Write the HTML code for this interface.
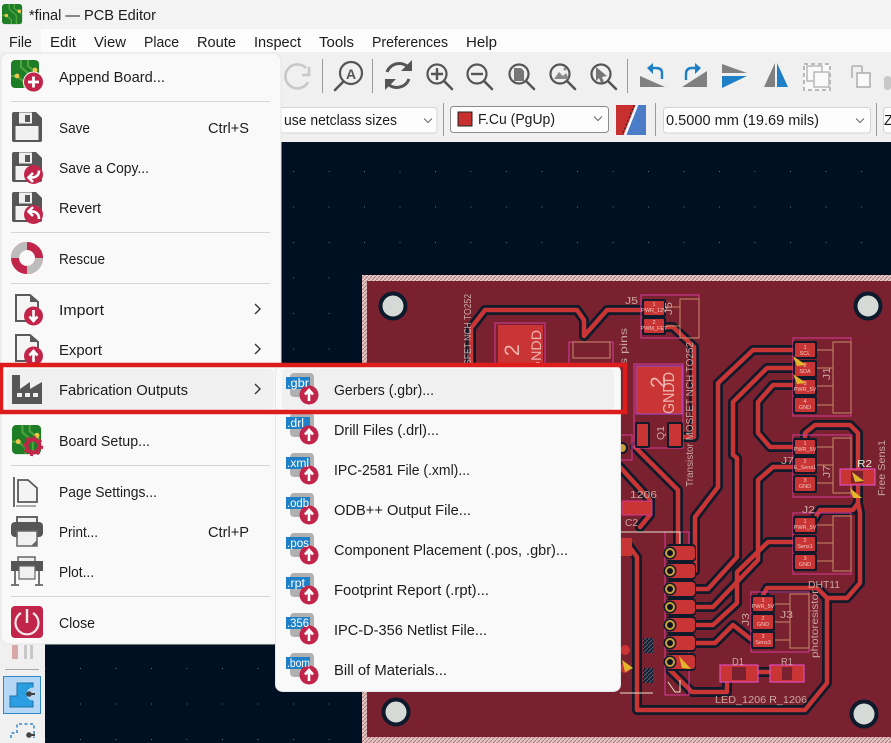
<!DOCTYPE html>
<html><head><meta charset="utf-8"><title>final — PCB Editor</title>
<style>
html,body{margin:0;padding:0;width:891px;height:743px;overflow:hidden;background:#f0f0f0}
svg{display:block}
text{font-family:"Liberation Sans",sans-serif;font-size:14.5px;fill:#1c1c1c}
.silk{fill:#c9a79f;font-size:10px}
.p{fill:#eec8c0;font-size:5.500px;text-anchor:middle}
.l{font-size:11.500px;fill:#fff}
</style></head><body>
<svg width="891" height="743" viewBox="0 0 891 743" xmlns="http://www.w3.org/2000/svg">
<defs>
<pattern id="grid" x="9" y="29" width="35.5" height="35.5" patternUnits="userSpaceOnUse"><rect width="1" height="1" fill="#66707c"/></pattern>
<pattern id="edge" width="4" height="4" patternUnits="userSpaceOnUse"><rect width="4" height="4" fill="#e6c8c6"/><path d="M0 4L4 0" stroke="#a87c7c" stroke-width="1"/></pattern>
<pattern id="hat" width="4" height="4" patternUnits="userSpaceOnUse"><rect width="4" height="4" fill="#14202f"/><path d="M0 4L4 0" stroke="#5a5f78" stroke-width="1"/></pattern>
<g id="tr" fill="none" stroke-linejoin="round" stroke-linecap="round">
<path d="M471 370V328L485 310H577L584 320V336L607 310H650"/>
<path d="M663 327H673L694 347V437H683"/>
<path d="M795 350H753L718 383V487L695 517V571H688"/>
<path d="M795 368H767L733 402V455L737 458V557L708 589H690"/>
<path d="M795 385H773L758 402V433L770 447H795"/>
<path d="M795 467H773L758 480V560L713 607H690"/>
<path d="M805 443V433L815 425H850L858 433V503L853 510H820L812 523"/>
<path d="M858 503L860 513V583L847 598H827L817 588H767L762 597"/>
<path d="M795 542H768L737 572V603L713 625H690"/>
<path d="M690 643H715L733 625L752 640"/>
<path d="M670 663V670L692 692H727V677"/>
<path d="M827 598V683L805 710H637V557L628 545"/>
<path d="M773 672H758"/>
<path d="M635 447L678 490V547"/>
<path d="M620 467L650 500V515L640 527"/>
</g>
<g id="badge"><circle r="9.5" fill="#c2254a"/></g>
<g id="up"><circle r="9.5" fill="#c2254a"/><path d="M0 6V-4M-4 -0.5L0 -5L4 -0.5" fill="none" stroke="#fff" stroke-width="2.6"/></g>
<g id="down"><circle r="9.5" fill="#c2254a"/><path d="M0 -6V4M-4 0.5L0 5L4 0.5" fill="none" stroke="#fff" stroke-width="2.6"/></g>
<g id="floppy"><path d="M0 2Q0 0 2 0H24L30 6V28Q30 30 28 30H2Q0 30 0 28Z" fill="#565656"/><rect x="3.500" y="14" width="23" height="14" fill="#f1f1f1"/><rect x="7" y="0.500" width="13" height="11" fill="#f1f1f1"/><rect x="13" y="3" width="5" height="7" fill="#565656"/></g>
<g id="doc"><path d="M1 1H15L23 8V27H1Z" fill="#f4f4f4" stroke="#5a5a5a" stroke-width="2"/><path d="M15 0L24 8H15Z" fill="#5a5a5a"/></g>
<g id="sub"><rect x="4" y="-17" width="24" height="24" rx="4" fill="#b0b0b0"/><rect x="0" y="-13" width="24" height="12" fill="#1f80c8"/><use href="#up" x="23" y="5"/></g>
<g id="chev"><path d="M-3 -5L2 0L-3 5" fill="none" stroke="#333" stroke-width="1.400"/></g>
<g id="dd"><path d="M-4 -2.500L0 1.500L4 -2.500" fill="none" stroke="#666" stroke-width="1"/></g>
<g id="zl"><circle cx="11" cy="11" r="9.500" fill="#f0f0f0" stroke="#555" stroke-width="2.200"/><path d="M18 18L26 26" stroke="#555" stroke-width="2.600" stroke-linecap="round"/></g>
<g id="pad"><rect x="-2" y="-2" width="24" height="18" rx="2" fill="#101a2a"/><rect width="20" height="14" rx="1" fill="#c93434"/></g>
<g id="padv"><rect x="-4" y="-9" width="30" height="18" rx="4" fill="#101a2a"/><rect x="-4" y="-7" width="29" height="14" rx="3" fill="#c93434"/><circle r="6.500" fill="#101a2a"/><circle r="5" fill="#c9a03a"/><circle r="3" fill="#0a1420"/></g>
<g id="green"><rect width="28" height="28" rx="4" fill="#1e7d27"/><path d="M10 0V7L20 16V28M17 0V6L27 14M0 16H6L13 22V28" fill="none" stroke="#4fa53c" stroke-width="2"/><circle cx="6" cy="16" r="2.400" fill="#efc64a"/><circle cx="24" cy="10" r="2.400" fill="#efc64a"/></g>
</defs>

<!-- canvas -->
<rect x="0" y="142" width="891" height="601" fill="#001023"/>
<rect x="45" y="142" width="846" height="601" fill="url(#grid)"/>

<!-- board -->
<rect x="362" y="275" width="560" height="480" fill="url(#edge)"/>
<rect x="367" y="281" width="560" height="456" fill="#7a2130"/>
<use href="#tr" stroke="#0f1a2b" stroke-width="10"/>
<use href="#tr" stroke="#c93434" stroke-width="4.500"/>
<g fill="#d6dad6" stroke="#0d1a2c" stroke-width="4">
<circle cx="393" cy="306" r="12.500"/><circle cx="868" cy="306" r="12.500"/><circle cx="864" cy="714" r="12.500"/><circle cx="396" cy="712" r="12.500"/>
</g>

<!-- footprints -->
<g fill="none" stroke="#d23a92" stroke-width="1.100">
<rect x="641" y="295" width="58" height="43"/><rect x="634" y="364" width="49" height="84"/><rect x="793" y="338" width="58" height="78"/>
<rect x="793" y="435" width="58" height="62"/><rect x="793" y="513" width="58" height="61"/><rect x="751" y="592" width="58" height="60"/>
<rect x="665" y="532" width="24" height="163"/><rect x="569" y="342" width="44" height="30"/><rect x="620" y="435" width="12" height="25"/>
<rect x="495" y="323" width="50" height="60"/>
</g>
<g fill="none" stroke="#c68a66" stroke-width="1">
<rect x="680" y="299" width="19" height="39"/><rect x="833" y="342" width="18" height="71"/><rect x="833" y="438" width="18" height="55"/>
<rect x="833" y="516" width="18" height="55"/><rect x="790" y="594" width="19" height="54"/><rect x="573" y="342" width="37" height="16"/>
<path d="M815 350H833M815 368H833M815 386H833M815 405H833M815 447H833M815 465H833M815 483H833M815 525H833M815 543H833M815 561H833M773 604H790M773 622H790M773 640H790M663 307H680M663 326H680"/>
<path d="M620 532H665M620 693H648"/>
</g>
<path d="M620 532H680V545M680 680V692H675L668 682M620 693H653" fill="none" stroke="#e8e4c8" stroke-width="1"/>
<rect x="636" y="366" width="46" height="48" fill="#c93434" stroke="#9a4ad0" stroke-width="1"/>
<rect x="498" y="325" width="45" height="45" fill="#c93434"/>
<g fill="#101a2a"><rect x="635" y="422" width="15" height="26" rx="2"/><rect x="667" y="422" width="16" height="26" rx="2"/></g>
<g fill="#c93434"><rect x="637" y="424" width="11" height="22"/><rect x="669" y="424" width="12" height="22"/></g>
<use href="#pad" x="644" y="301"/><use href="#pad" x="644" y="319"/>
<use href="#pad" x="795" y="343"/><use href="#pad" x="795" y="362"/><use href="#pad" x="795" y="380"/><use href="#pad" x="795" y="398"/>
<use href="#pad" x="795" y="440"/><use href="#pad" x="795" y="458"/><use href="#pad" x="795" y="477"/>
<use href="#pad" x="795" y="518"/><use href="#pad" x="795" y="537"/><use href="#pad" x="795" y="555"/>
<use href="#pad" x="753" y="597"/><use href="#pad" x="753" y="615"/><use href="#pad" x="753" y="633"/>
<text class="p" x="654" y="306">1</text><text class="p" x="654" y="312">PWR_12V</text><text class="p" x="654" y="324">2</text><text class="p" x="654" y="330">PWM_FET</text>
<text class="p" x="805" y="349">1</text><text class="p" x="805" y="355">SCL</text><text class="p" x="805" y="367">2</text><text class="p" x="805" y="373">SDA</text><text class="p" x="805" y="385">3</text><text class="p" x="805" y="391">PWR_5V</text><text class="p" x="805" y="403">4</text><text class="p" x="805" y="409">GND</text>
<text class="p" x="805" y="445">1</text><text class="p" x="805" y="451">PWR_5V</text><text class="p" x="805" y="463">2</text><text class="p" x="805" y="469">E_Sens1</text><text class="p" x="805" y="482">3</text><text class="p" x="805" y="488">GND</text>
<text class="p" x="805" y="523">1</text><text class="p" x="805" y="529">PWR_5V</text><text class="p" x="805" y="542">2</text><text class="p" x="805" y="548">Sens1</text><text class="p" x="805" y="560">3</text><text class="p" x="805" y="566">GND</text>
<text class="p" x="763" y="602">1</text><text class="p" x="763" y="608">PWR_5V</text><text class="p" x="763" y="620">2</text><text class="p" x="763" y="626">GND</text><text class="p" x="763" y="638">3</text><text class="p" x="763" y="644">Sens3</text>
<use href="#padv" x="670" y="553"/><use href="#padv" x="670" y="571"/><use href="#padv" x="670" y="589"/><use href="#padv" x="670" y="607"/><use href="#padv" x="670" y="625"/><use href="#padv" x="670" y="643"/><use href="#padv" x="670" y="662"/>
<g fill="#c93434" stroke="#e04cc0" stroke-width="1.200"><rect x="720" y="665" width="38" height="17"/><rect x="770" y="665" width="34" height="17"/><rect x="840" y="469" width="35" height="16"/></g>
<rect x="732" y="667" width="14" height="13" fill="#7a2130"/><rect x="782" y="667" width="10" height="13" fill="#7a2130"/><rect x="851" y="471" width="12" height="12" fill="#7a2130"/>
<rect x="643" y="638" width="10" height="15" fill="url(#hat)"/><rect x="643" y="668" width="10" height="15" fill="url(#hat)"/>
<circle cx="625" cy="650" r="5" fill="#c93434"/><circle cx="625" cy="668" r="5" fill="#c93434"/>
<rect x="621" y="538" width="11" height="18" fill="#c93434"/><rect x="622" y="501" width="30" height="14" fill="#c93434" stroke="#d23a92"/>
<circle cx="622" cy="448" r="5" fill="#c9a03a" stroke="#101a2a" stroke-width="2"/>
<g fill="#e3b52b"><path d="M793 356L806 365L797 366Z"/><path d="M793 374L806 383L797 384Z"/><path d="M852 472L864 481L855 482Z"/><path d="M850 488L862 498L853 498Z"/><path d="M679 656L691 669L682 668Z"/><path d="M622 660L633 668L625 672Z"/></g>

<!-- silk text -->
<text class="silk" x="625" y="304" textLength="13" lengthAdjust="spacingAndGlyphs">J5</text>
<text x="658" y="395" style="font-size:21px;fill:#eeb5b0" transform="rotate(-90 658 388)">2</text>
<text x="674" y="414" transform="rotate(-90 674 414)" style="font-size:16px;fill:#eeb5b0" textLength="42" lengthAdjust="spacingAndGlyphs">GNDD</text>
<text x="519" y="356" transform="rotate(-90 519 356)" style="font-size:21px;fill:#eeb5b0">2</text>
<text x="541" y="372" transform="rotate(-90 541 372)" style="font-size:14px;fill:#eeb5b0" textLength="42" lengthAdjust="spacingAndGlyphs">GNDD</text>
<text class="silk" x="693" y="487" transform="rotate(-90 693 487)" textLength="145" lengthAdjust="spacingAndGlyphs">Transistor MOSFET NCH TO252</text>
<text class="silk" x="471" y="365" transform="rotate(-90 471 365)" textLength="71" lengthAdjust="spacingAndGlyphs">SFET NCH TO252</text>
<text class="silk" x="627" y="365" transform="rotate(-90 627 365)" textLength="37" lengthAdjust="spacingAndGlyphs">s pins</text>
<text class="silk" x="664" y="440" transform="rotate(-90 664 440)" textLength="14" lengthAdjust="spacingAndGlyphs">Q1</text>
<text class="silk" x="672" y="315" transform="rotate(-90 672 315)" textLength="13" lengthAdjust="spacingAndGlyphs">J5</text>
<text class="silk" x="781" y="464" textLength="13" lengthAdjust="spacingAndGlyphs">J7</text>
<text class="silk" x="802" y="513" textLength="13" lengthAdjust="spacingAndGlyphs">J2</text>
<text class="silk" x="780" y="618" textLength="13" lengthAdjust="spacingAndGlyphs">J3</text>
<text class="silk" x="749" y="626" transform="rotate(-90 749 626)" textLength="13" lengthAdjust="spacingAndGlyphs">J3</text>
<text class="silk" x="830" y="380" transform="rotate(-90 830 380)" textLength="13" lengthAdjust="spacingAndGlyphs">J1</text>
<text class="silk" x="830" y="478" transform="rotate(-90 830 478)" textLength="13" lengthAdjust="spacingAndGlyphs">J7</text>
<text class="silk" x="857" y="467" style="fill:#e8e8d0" textLength="15" lengthAdjust="spacingAndGlyphs">R2</text>
<text class="silk" x="885" y="496" transform="rotate(-90 885 496)" textLength="56" lengthAdjust="spacingAndGlyphs">Free Sens1</text>
<text class="silk" x="808" y="588" textLength="32" lengthAdjust="spacingAndGlyphs">DHT11</text>
<text class="silk" x="818" y="658" transform="rotate(-90 818 658)" textLength="68" lengthAdjust="spacingAndGlyphs">photoresistor</text>
<text class="silk" x="715" y="703" textLength="92" lengthAdjust="spacingAndGlyphs">LED_1206 R_1206</text>
<text class="silk" x="732" y="665" textLength="12" lengthAdjust="spacingAndGlyphs">D1</text>
<text class="silk" x="781" y="665" textLength="12" lengthAdjust="spacingAndGlyphs">R1</text>
<text class="silk" x="625" y="526" textLength="13" lengthAdjust="spacingAndGlyphs">C2</text>
<text class="silk" x="630" y="498" textLength="27" lengthAdjust="spacingAndGlyphs">1206</text>

<!-- title, menu, toolbars -->
<rect width="891" height="29" fill="#f3f3f3"/>
<rect y="29" width="891" height="23" fill="#fcfcfc"/>
<rect y="29" width="41" height="23" fill="#f5f5f5"/>
<rect y="52" width="891" height="90" fill="#f0f0f0"/>
<use href="#green" transform="translate(2 4) scale(.72)"/>
<text x="29" y="20" textLength="127" lengthAdjust="spacingAndGlyphs">*final — PCB Editor</text>
<text x="9" y="47" textLength="23" lengthAdjust="spacingAndGlyphs">File</text>
<text x="50" y="47" textLength="26" lengthAdjust="spacingAndGlyphs">Edit</text>
<text x="94" y="47" textLength="32" lengthAdjust="spacingAndGlyphs">View</text>
<text x="144" y="47" textLength="35" lengthAdjust="spacingAndGlyphs">Place</text>
<text x="197" y="47" textLength="39" lengthAdjust="spacingAndGlyphs">Route</text>
<text x="254" y="47" textLength="47" lengthAdjust="spacingAndGlyphs">Inspect</text>
<text x="319" y="47" textLength="35" lengthAdjust="spacingAndGlyphs">Tools</text>
<text x="372" y="47" textLength="76" lengthAdjust="spacingAndGlyphs">Preferences</text>
<text x="466" y="47" textLength="31" lengthAdjust="spacingAndGlyphs">Help</text>

<g fill="none" stroke="#c8c8c8" stroke-width="2.600"><path d="M306 68A12 12 0 1 0 308 82"/><path d="M302 75L309 75V67"/></g>
<g fill="#9a9a9a"><rect x="322" y="59" width="1" height="34"/><rect x="372" y="59" width="1" height="34"/><rect x="627" y="59" width="1" height="34"/><rect x="443" y="103" width="1" height="33"/><rect x="655" y="103" width="1" height="33"/><rect x="876" y="103" width="1" height="33"/></g>

<circle cx="351" cy="73" r="11" fill="#f0f0f0" stroke="#555" stroke-width="2.200"/><path d="M343 82L335 90" stroke="#555" stroke-width="2.600" stroke-linecap="round"/>
<text x="346" y="79" style="font-size:14px;font-weight:bold;fill:#555">A</text>
<g fill="none" stroke="#555" stroke-width="3"><path d="M387 72A13 13 0 0 1 409 68"/><path d="M409 79A13 13 0 0 1 388 84"/></g>
<path d="M412 60V71H401ZM385 90V79H396Z" fill="#555"/>
<use href="#zl" x="426" y="63"/><path d="M431 74H443M437 68V80" stroke="#555" stroke-width="2.400"/>
<use href="#zl" x="466" y="63"/><path d="M471 74H483" stroke="#555" stroke-width="2.400"/>
<use href="#zl" x="508" y="63"/><path d="M514 68H521L524 71V81H514Z" fill="#777"/>
<use href="#zl" x="549" y="63"/><path d="M554 79L559 72L563 76L566 73L569 79Z" fill="#888"/><circle cx="565" cy="69" r="1.500" fill="#888"/>
<use href="#zl" x="590" y="63"/><path d="M596 67L607 76L602 77L604 82L601 83L599 78L596 81Z" fill="#777"/>

<g fill="#808080"><path d="M640 76L665 87V87H640Z"/><path d="M707 71V87H682Z"/><path d="M722 64L747 73H722Z"/><path d="M764 87L775 63V87Z"/></g>
<g fill="#1f80c8"><path d="M722 76H747L722 88Z"/><path d="M777 63L788 87H777Z"/></g>
<g fill="none" stroke="#1f80c8" stroke-width="2.400"><path d="M662 79V73Q662 68 656 68H650"/><path d="M686 80V74Q686 68 692 68H698"/></g>
<path d="M653 63L647 68L653 74ZM695 63L701 68L695 74Z" fill="#1f80c8"/>
<g fill="#fafafa" stroke="#b8b8b8"><rect x="804" y="64" width="26" height="26" stroke-dasharray="4 3" stroke-width="2"/><rect x="807" y="66" width="15" height="15" stroke-width="1.500"/><rect x="814" y="72" width="15" height="15" stroke-width="1.500"/></g>
<g fill="none" stroke="#b8b8b8" stroke-width="1.800"><path d="M852 66V78M852 66H862M862 66V73"/><rect x="857" y="73" width="13" height="14" fill="#fafafa"/></g>
<rect x="884" y="76" width="7" height="14" rx="3" fill="#c8c8c8"/>

<g fill="#fdfdfd" stroke="#d4d4d4"><rect x="270" y="107.500" width="167" height="25.500" rx="3"/><rect x="450.500" y="106.500" width="158" height="26" rx="3" stroke="#8c8c8c"/><rect x="663.500" y="107.500" width="207" height="25.500" rx="3"/><rect x="883.500" y="107.500" width="20" height="25.500" rx="3"/></g>
<text x="284" y="125" textLength="113" lengthAdjust="spacingAndGlyphs">use netclass sizes</text>
<use href="#dd" x="428" y="121"/>
<rect x="458" y="112" width="14" height="14" fill="#c83030" stroke="#222"/>
<text x="478" y="124" textLength="77" lengthAdjust="spacingAndGlyphs">F.Cu (PgUp)</text>
<use href="#dd" x="598" y="119"/>
<path d="M616 105H637L625 135H616Z" fill="#c83030"/><path d="M637 105H646V135H625Z" fill="#4a7cc8"/>
<path d="M637 105L625 135" stroke="#fff" stroke-width="2.500"/><path d="M634 105L622 135" stroke="#222" stroke-width="1" stroke-dasharray="2 2"/>
<text x="666" y="125" textLength="153" lengthAdjust="spacingAndGlyphs">0.5000 mm (19.69 mils)</text>
<use href="#dd" x="860" y="121"/>
<text x="884" y="125">Z</text>

<!-- left toolbar -->
<rect x="0" y="142" width="45" height="601" fill="#f0f0f0"/>
<g fill="#d8a8a8"><rect x="12" y="645" width="6" height="14"/></g><g fill="#c8c8c8"><rect x="24" y="645" width="3" height="14"/><rect x="30" y="645" width="3" height="14"/></g>
<rect x="5" y="669" width="34" height="1" fill="#a8a8a8"/>
<rect x="3.500" y="676.500" width="37" height="37" fill="#b3d7f5" stroke="#2f88c8"/>
<path d="M10 707V696H17V683H33V707Z" fill="#2a9ee0" stroke="#1f70a8"/>
<circle cx="33" cy="694" r="6.500" fill="#b3d7f5"/>
<path d="M29 694H35" stroke="#444" stroke-width="2"/><circle cx="29" cy="694" r="2.800" fill="#444"/>
<path d="M11 738V733H17V724H34V738" fill="none" stroke="#2f88c8" stroke-width="1.500" stroke-dasharray="3 2.500"/>
<path d="M29 735H35" stroke="#444" stroke-width="2"/><circle cx="29" cy="735" r="2.800" fill="#444"/>

<!-- left menu -->
<rect x="1" y="53" width="280" height="591" rx="8" fill="#f9f9f9" stroke="#e6e6e6"/>
<g fill="#d6d6d6"><rect x="11" y="101" width="259" height="1"/><rect x="11" y="232" width="259" height="1"/><rect x="11" y="283" width="259" height="1"/><rect x="11" y="465" width="259" height="1"/><rect x="11" y="596" width="259" height="1"/></g>
<rect x="7" y="369" width="267" height="40" rx="4" fill="#f0f0f0"/>

<use href="#green" x="11" y="60"/>
<circle cx="33.500" cy="82" r="10" fill="#c2254a" stroke="#f9f9f9" stroke-width="1"/><path d="M28 82H39M33.500 76.500V87.500" stroke="#fff" stroke-width="2.800"/>
<use href="#floppy" x="12" y="112"/>
<use href="#floppy" x="12" y="152"/><use href="#badge" x="33.500" y="174.500"/>
<path d="M28 178.500Q28 171 37 171.500M34 167L38.500 171.500L34 176" fill="none" stroke="#fff" stroke-width="2.600" transform="rotate(180 33.500 174.500) scale(1 1)"/>
<use href="#floppy" x="12" y="192"/><use href="#badge" x="33.500" y="214.500"/>
<path d="M39 219Q39 211 30 211.500M33 207L28.500 211.500L33 216" fill="none" stroke="#fff" stroke-width="2.600"/>

<circle cx="27" cy="258" r="12" fill="none" stroke="#c2254a" stroke-width="8"/>
<path d="M27 242A16 16 0 0 0 11 258H19A8 8 0 0 1 27 250ZM27 274A16 16 0 0 0 43 258H35A8 8 0 0 1 27 266Z" fill="#bdbdbd"/>

<use href="#doc" x="15" y="294"/><use href="#down" x="33.500" y="316"/>
<use href="#doc" x="15" y="334"/><use href="#up" x="33.500" y="356"/>
<path d="M12 375H20V389L30 382V389L42 382V404H12Z" fill="#565656"/><g fill="#f0f0f0"><rect x="17" y="393" width="5" height="4"/><rect x="25" y="393" width="5" height="4"/><rect x="33" y="393" width="5" height="4"/></g>
<use href="#green" transform="translate(12 425) scale(1.040)"/>
<circle cx="33" cy="446" r="6.500" fill="none" stroke="#c2254a" stroke-width="4"/><circle cx="33" cy="446" r="9" fill="none" stroke="#c2254a" stroke-width="2.400" stroke-dasharray="3 4"/>
<path d="M14 477V507M18 480H28L37 488V502H18Z" fill="#f4f4f4" stroke="#5a5a5a" stroke-width="1.800"/><path d="M16 506H36" stroke="#5a5a5a"/>
<path d="M17 522V517H37V522" fill="#f0f0f0" stroke="#666" stroke-width="2"/><rect x="11" y="522" width="32" height="15" rx="4" fill="#565656"/><path d="M17 531H37V546H17Z" fill="#f0f0f0" stroke="#666" stroke-width="1.500"/><path d="M31 546L37 540V546Z" fill="#666"/>
<rect x="18" y="557" width="17" height="6" fill="#f0f0f0" stroke="#666" stroke-width="1.500"/><rect x="11" y="561" width="32" height="10" fill="#565656"/><path d="M15 571V585M39 571V585M11 585H19M35 585H43" stroke="#666" stroke-width="1.800"/><path d="M19 566H35V579H19Z" fill="#f0f0f0" stroke="#666" stroke-width="1.200"/>
<rect x="11" y="606" width="32" height="32" rx="4" fill="#c2254a"/><path d="M21 613A11.500 11.500 0 1 0 33 613" fill="none" stroke="#f4e8ea" stroke-width="2.200"/><path d="M27 609V623" stroke="#f4e8ea" stroke-width="2.400"/>

<text x="59" y="82" textLength="106" lengthAdjust="spacingAndGlyphs">Append Board...</text>
<text x="59" y="133" textLength="31" lengthAdjust="spacingAndGlyphs">Save</text>
<text x="208" y="133" textLength="41" lengthAdjust="spacingAndGlyphs">Ctrl+S</text>
<text x="59" y="173" textLength="90" lengthAdjust="spacingAndGlyphs">Save a Copy...</text>
<text x="59" y="213" textLength="42" lengthAdjust="spacingAndGlyphs">Revert</text>
<text x="59" y="264" textLength="46" lengthAdjust="spacingAndGlyphs">Rescue</text>
<text x="59" y="315" textLength="45" lengthAdjust="spacingAndGlyphs">Import</text>
<text x="59" y="355" textLength="43" lengthAdjust="spacingAndGlyphs">Export</text>
<text x="59" y="395" textLength="129" lengthAdjust="spacingAndGlyphs">Fabrication Outputs</text>
<text x="59" y="446" textLength="91" lengthAdjust="spacingAndGlyphs">Board Setup...</text>
<text x="59" y="497" textLength="98" lengthAdjust="spacingAndGlyphs">Page Settings...</text>
<text x="59" y="537" textLength="39" lengthAdjust="spacingAndGlyphs">Print...</text>
<text x="208" y="537" textLength="41" lengthAdjust="spacingAndGlyphs">Ctrl+P</text>
<text x="59" y="577" textLength="35" lengthAdjust="spacingAndGlyphs">Plot...</text>
<text x="59" y="628" textLength="36" lengthAdjust="spacingAndGlyphs">Close</text>
<use href="#chev" x="258" y="309"/><use href="#chev" x="258" y="349"/><use href="#chev" x="258" y="389"/>

<!-- submenu -->
<rect x="275.500" y="365" width="345" height="326.500" rx="7" fill="#f9f9f9" stroke="#e6e6e6"/>
<rect x="282" y="369" width="332" height="40" rx="4" fill="#f0f0f0"/>
<use href="#sub" x="286" y="390"/><use href="#sub" x="286" y="430"/><use href="#sub" x="286" y="470"/><use href="#sub" x="286" y="510"/><use href="#sub" x="286" y="550"/><use href="#sub" x="286" y="590"/><use href="#sub" x="286" y="630"/><use href="#sub" x="286" y="670"/>
<text class="l" x="287" y="387" textLength="22" lengthAdjust="spacingAndGlyphs">.gbr</text>
<text class="l" x="287" y="427" textLength="17" lengthAdjust="spacingAndGlyphs">.drl</text>
<text class="l" x="287" y="467" textLength="22" lengthAdjust="spacingAndGlyphs">.xml</text>
<text class="l" x="287" y="507" textLength="22" lengthAdjust="spacingAndGlyphs">.odb</text>
<text class="l" x="287" y="547" textLength="22" lengthAdjust="spacingAndGlyphs">.pos</text>
<text class="l" x="287" y="587" textLength="18" lengthAdjust="spacingAndGlyphs">.rpt</text>
<text class="l" x="287" y="627" textLength="22" lengthAdjust="spacingAndGlyphs">.356</text>
<text class="l" x="287" y="667" textLength="23" lengthAdjust="spacingAndGlyphs">.bom</text>
<text x="334" y="395" textLength="100" lengthAdjust="spacingAndGlyphs">Gerbers (.gbr)...</text>
<text x="334" y="435" textLength="105" lengthAdjust="spacingAndGlyphs">Drill Files (.drl)...</text>
<text x="334" y="475" textLength="136" lengthAdjust="spacingAndGlyphs">IPC-2581 File (.xml)...</text>
<text x="334" y="515" textLength="137" lengthAdjust="spacingAndGlyphs">ODB++ Output File...</text>
<text x="334" y="555" textLength="234" lengthAdjust="spacingAndGlyphs">Component Placement (.pos, .gbr)...</text>
<text x="334" y="595" textLength="155" lengthAdjust="spacingAndGlyphs">Footprint Report (.rpt)...</text>
<text x="334" y="635" textLength="153" lengthAdjust="spacingAndGlyphs">IPC-D-356 Netlist File...</text>
<text x="334" y="675" textLength="113" lengthAdjust="spacingAndGlyphs">Bill of Materials...</text>

<!-- red annotation -->
<rect x="1" y="365" width="624" height="47" fill="none" stroke="#dd1c1c" stroke-width="4.500"/>
</svg>
</body></html>
